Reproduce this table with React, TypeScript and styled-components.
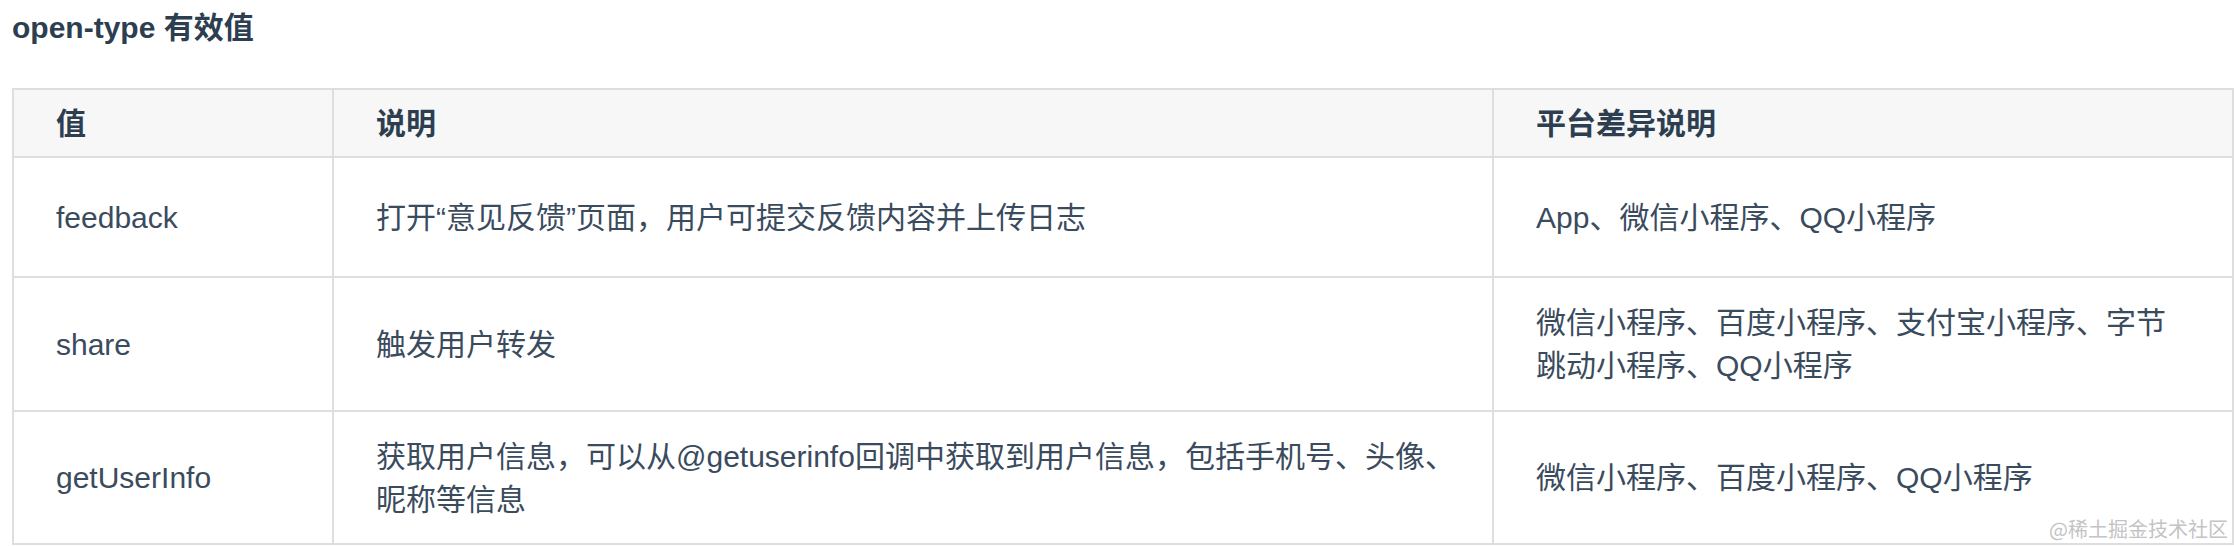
import styled, { createGlobalStyle } from "styled-components";

const GlobalStyle = createGlobalStyle`
    html, body {
        margin: 0;
        padding: 0;
        background: #ffffff;
    }
    body {
        font-family: "Liberation Sans", "Noto Sans CJK SC", sans-serif;
        color: #2c3e50;
    }
`

const Page = styled.div`
    position: relative;
    width: 2234px;
    height: 546px;
    padding-left: 12px;
    box-sizing: border-box;
    overflow: hidden;
`

const Title = styled.h3`
    margin: 0;
    padding-top: 8px;
    height: 88px;
    box-sizing: border-box;
    font-size: 30px;
    line-height: 40px;
    font-weight: 700;
    color: #2c3e50;
`

const Table = styled.div`
    display: grid;
    grid-template-columns: 320px 1160px 740px;
    grid-template-rows: 68px 120px 134px 133px;
    width: 2222px;
    border-top: 2px solid #dedede;
    border-left: 2px solid #dedede;
`

const Cell = styled.div<{ $head?: boolean }>`
    display: flex;
    align-items: center;
    box-sizing: border-box;
    padding: 0 40px 0 42px;
    border-right: 2px solid #dedede;
    border-bottom: 2px solid #dedede;
    background: ${(p) => (p.$head ? "#f7f7f7" : "#ffffff")};
    font-size: 30px;
    line-height: 43px;
    font-weight: ${(p) => (p.$head ? 700 : 400)};
    color: ${(p) => (p.$head ? "#2c3e50" : "#3a4b5e")};
    white-space: nowrap;
`

const Watermark = styled.span`
    position: absolute;
    right: 6px;
    bottom: 6px;
    font-family: "Noto Sans CJK SC", sans-serif;
    font-size: 20px;
    line-height: 22px;
    color: #c4c4c4;
    text-shadow: 0 0 2px #ffffff;
`

const rows: { value: string; desc: string[]; platform: string[] }[] = [
    {
        value: "feedback",
        desc: ["打开“意见反馈”页面，用户可提交反馈内容并上传日志"],
        platform: ["App、微信小程序、QQ小程序"],
    },
    {
        value: "share",
        desc: ["触发用户转发"],
        platform: ["微信小程序、百度小程序、支付宝小程序、字节", "跳动小程序、QQ小程序"],
    },
    {
        value: "getUserInfo",
        desc: ["获取用户信息，可以从@getuserinfo回调中获取到用户信息，包括手机号、头像、", "昵称等信息"],
        platform: ["微信小程序、百度小程序、QQ小程序"],
    },
]

function Lines({ lines }: { lines: string[] }) {
    return (
        <div>
            {lines.map((l, i) => (
                <div key={i}>{l}</div>
            ))}
        </div>
    )
}

export default function App() {
    return (
        <Page>
            <GlobalStyle />
            <Title>open-type 有效值</Title>
            <Table>
                <Cell $head>值</Cell>
                <Cell $head>说明</Cell>
                <Cell $head>平台差异说明</Cell>
                {rows.map((r) => (
                    <>
                        <Cell key={r.value + "-v"}>{r.value}</Cell>
                        <Cell key={r.value + "-d"}><Lines lines={r.desc} /></Cell>
                        <Cell key={r.value + "-p"}><Lines lines={r.platform} /></Cell>
                    </>
                ))}
            </Table>
            <Watermark>@稀土掘金技术社区</Watermark>
        </Page>
    )
}
